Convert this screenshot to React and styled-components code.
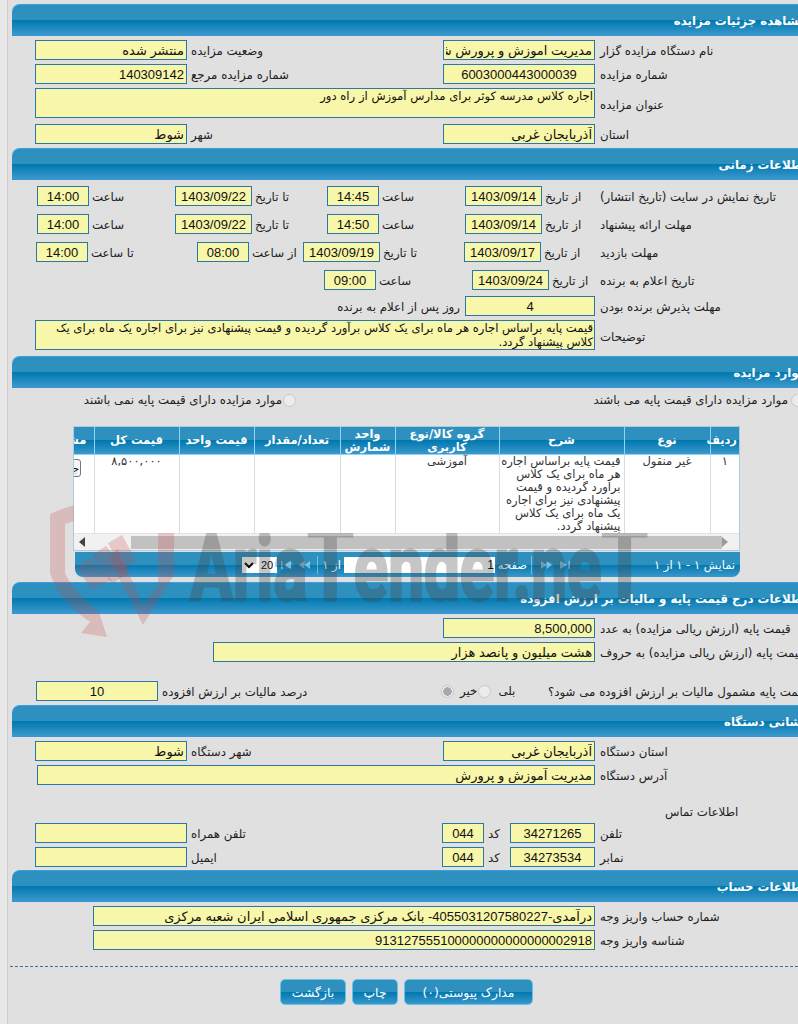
import React from 'react';
import styled, { createGlobalStyle } from 'styled-components';

const GlobalStyle = createGlobalStyle`
  html, body {
    margin: 0;
    padding: 0;
    overflow: hidden;
    background: #e0e0e0;
  }
  body {
    font-family: "Liberation Sans", "DejaVu Sans", sans-serif;
    font-size: 12px;
    color: #222;
  }
`;

const barGradient = 'linear-gradient(#2e90bf 0, #2e90bf 50%, #0078ae 50%, #3a98cc 100%)';

const Page = styled.div`
  position: relative;
  width: 798px;
  height: 1024px;
  overflow: hidden;
  padding-top: 4px;
  box-sizing: border-box;
  background: linear-gradient(to right, #e8e8e8 7px, #cfcfcf 7px, #cfcfcf 8px, #e0e0e0 8px);
`;

const SectionBar = styled.div`
  height: 32px;
  margin: ${({ $top }) => $top || 0}px -8px 0 12px;
  box-sizing: border-box;
  border-top: 1px solid #3a9fe0;
  border-bottom: 1px solid #3a94d8;
  border-top-left-radius: 8px;
  background: ${barGradient};
  direction: rtl;
  color: #fff;
  font: bold 11.8px/32px "DejaVu Sans", sans-serif;
`;

const Row = styled.div`
  display: grid;
  grid-template-columns: ${({ $cols }) => $cols};
  height: ${({ $h }) => $h || 20}px;
  margin-top: ${({ $top }) => $top || 0}px;
`;

const Label = styled.div`
  direction: rtl;
  text-align: left;
  white-space: nowrap;
  padding-left: ${({ $pad }) => $pad ?? 4}px;
  padding-top: ${({ $dy }) => $dy || 3}px;
  font: 11.8px/16px "DejaVu Sans", sans-serif;
  color: #222;
`;

const LabelEnd = styled(Label)`
  text-align: right;
  padding-left: 0;
  padding-right: 5px;
`;

const Field = styled.input`
  box-sizing: border-box;
  width: 100%;
  height: 20px;
  margin: 0;
  padding: 0 2px;
  border: 1px solid #2a78a8;
  border-radius: 0;
  background: #f8f6a8;
  color: #111;
  direction: rtl;
  text-align: ${({ $center }) => ($center ? 'center' : 'right')};
  font: 13px "Liberation Sans", "DejaVu Sans", sans-serif;
  outline: none;
`;

const Area = styled.textarea`
  box-sizing: border-box;
  width: 100%;
  height: 30px;
  margin: 0;
  padding: 0 1px;
  border: 1px solid #2a78a8;
  border-radius: 0;
  background: #f8f6a8;
  color: #111;
  direction: rtl;
  resize: none;
  overflow: hidden;
  font: 11.6px/14px "DejaVu Sans", sans-serif;
  outline: none;
`;

const Empty = styled.div``;

const RadioLine = styled.div`
  display: grid;
  grid-template-columns: 82px 214px 296px 1fr;
  height: 16px;
  margin-top: 4px;
  font: 11.8px/16px "DejaVu Sans", sans-serif;
`;

const RadioChoice = styled.label`
  display: flex;
  direction: rtl;
  align-items: center;
  white-space: nowrap;
  gap: ${({ $gap }) => $gap || 0}px;
`;

const Radio = styled.input.attrs({ type: 'radio' })`
  appearance: none;
  flex: none;
  width: 13px;
  height: 13px;
  margin: 0;
  border: 1px solid #c9c9c9;
  border-radius: 50%;
  background: ${({ $on }) =>
    $on ? 'radial-gradient(circle, #a8a8a8 0, #a8a8a8 4px, #ececec 4.5px)' : '#ececec'};
`;

const Choices = styled.div`
  display: flex;
  direction: ltr;
  align-items: center;
  height: 20px;
  margin-left: 1px;
  gap: 1px;
  font: 11.8px/16px "DejaVu Sans", sans-serif;
`;

const ChoiceText = styled.span`
  margin: 0 ${({ $r }) => $r || 0}px 0 ${({ $l }) => $l || 0}px;
`;

const GridWrap = styled.div`
  margin: 18px 58px 0 73px;
  border: 1px solid #a9cde0;
  border-bottom: 0;
`;

const TableClip = styled.div`
  position: relative;
  z-index: 4;
  overflow: hidden;
  direction: rtl;
  background: #fff;
`;

const Table = styled.table`
  table-layout: fixed;
  width: 705px;
  border-collapse: collapse;
  direction: rtl;
`;

const Th = styled.th`
  height: 27px;
  padding: 0 2px;
  border-left: 1px solid #8fd4f5;
  border-bottom: 1px solid #8fd4f5;
  background: ${barGradient};
  color: #fff;
  font: bold 11.5px/13px "DejaVu Sans", sans-serif;
  text-align: center;
`;

const Td = styled.td`
  height: 78px;
  padding: 0 3px;
  border-left: 1px solid #dcdcdc;
  vertical-align: top;
  text-align: ${({ $side }) => $side || 'center'};
  white-space: nowrap;
  font: 11.5px/13px "DejaVu Sans", sans-serif;
  color: #333;
`;

const RowButton = styled.button`
  width: 34px;
  height: 18px;
  margin-top: 4px;
  padding: 0;
  border: 1px solid #777;
  border-radius: 3px;
  background: #f4f4f4;
  font: 10px "DejaVu Sans", sans-serif;
`;

const ScrollBar = styled.div`
  display: flex;
  align-items: center;
  justify-content: space-between;
  height: 18px;
  padding: 0 6px;
  border-top: 1px solid #e4e4e4;
  box-sizing: border-box;
  background: #f1f1f1;
  border-bottom: 1px solid #a9cde0;
`;

const ScrollThumb = styled.div`
  position: absolute;
  left: 57px;
  width: 591px;
  height: 13px;
  background: #c1c1c1;
`;

const ScrollTrack = styled.div`
  position: relative;
  margin-left: -6px;
  display: flex;
  align-items: center;
  width: 100%;
  justify-content: space-between;
  padding: 0 5px;
  height: 100%;
`;

const Pager = styled.div`
  display: flex;
  direction: rtl;
  align-items: center;
  height: 25px;
  margin: 1px 58px 0 75px;
  padding-right: 5px;
  border-bottom-left-radius: 8px;
  border-bottom-right-radius: 8px;
  background: ${barGradient};
  color: #fff;
  font: 11.5px "DejaVu Sans", sans-serif;
`;

const PagerInfo = styled.span`
  width: 165px;
  white-space: nowrap;
  flex: none;
`;

const PagerIcons = styled.div`
  display: flex;
  align-items: center;
  gap: 8px;
  width: ${({ $w }) => $w}px;
  flex: none;
  justify-content: ${({ $end }) => ($end ? 'flex-end' : 'flex-start')};
  opacity: 0.45;
`;

const Sep = styled.span`
  width: 1px;
  height: 18px;
  flex: none;
  margin: 0 ${({ $m }) => $m || 0}px;
  background: rgba(255, 255, 255, 0.4);
`;

const PageField = styled.input`
  width: 151px;
  height: 16px;
  box-sizing: border-box;
  margin: 0 3px;
  padding: 0 1px;
  border: 0;
  background: #fff;
  direction: rtl;
  font: 12px "Liberation Sans", sans-serif;
`;

const PageSize = styled.select`
  width: 35px;
  height: 16px;
  margin: 0 4px 0 0;
  padding: 0;
  border: 0;
  background: #fff;
  direction: rtl;
  font: 11px "Liberation Sans", sans-serif;
`;

const ContactTitle = styled.div`
  margin: 19px 0 0 665px;
  direction: rtl;
  text-align: left;
  height: 19px;
  font: 11.8px/16px "DejaVu Sans", sans-serif;
`;

const Dashed = styled.div`
  margin: 16px 0 0 10px;
  border-top: 1px dashed #2a78a8;
`;

const Actions = styled.div`
  display: flex;
  direction: rtl;
  gap: 6px;
  margin: 12px 265px 0 0;
`;

const ActionButton = styled.button`
  width: ${({ $w }) => $w}px;
  height: 26px;
  padding: 0;
  border: 1px solid #63c3ea;
  border-radius: 5px;
  background: ${barGradient};
  color: #fff;
  font: 12.4px "DejaVu Sans", sans-serif;
`;

const Watermark = styled.svg`
  position: absolute;
  left: 0;
  top: 490px;
  z-index: 3;
  pointer-events: none;
`;

const row4 = '35px 152px 256px 152px 1fr';
const dateRow = '37px 52px 86px 77px 75px 52px 86px 77px 55px 1fr';

function FirstIcon({ flip }) {
  return (
    <svg width="10" height="8" viewBox="0 0 10 8" style={{ transform: flip ? 'scaleX(-1)' : 'none' }}>
      <path d="M0 0h1.5v8H0zM10 0v8L3 4z" fill="#fff" />
    </svg>
  );
}

function PrevIcon({ flip }) {
  return (
    <svg width="11" height="8" viewBox="0 0 11 8" style={{ transform: flip ? 'scaleX(-1)' : 'none' }}>
      <path d="M5.5 0v8L0 4zM11 0v8L5.5 4z" fill="#fff" />
    </svg>
  );
}

export default function App() {
  return (
    <Page>
      <GlobalStyle />

      <SectionBar>مشاهده جزئیات مزایده</SectionBar>
      <Row $cols={row4} $top={4}>
        <Empty />
        <Field readOnly value="منتشر شده" />
        <Label>وضعیت مزایده</Label>
        <Field readOnly value="مدیریت اموزش و پرورش شهرستان شوط" />
        <Label $pad={5}>نام دستگاه مزایده گزار</Label>
      </Row>
      <Row $cols={row4} $top={4}>
        <Empty />
        <Field readOnly value="140309142" />
        <Label>شماره مزایده مرجع</Label>
        <Field readOnly $center value="6003000443000039" />
        <Label $pad={5}>شماره مزایده</Label>
      </Row>
      <Row $cols="35px 560px 1fr" $h={30} $top={4}>
        <Empty />
        <Area readOnly value="اجاره کلاس مدرسه کوثر برای مدارس آموزش از راه دور" />
        <Label $pad={5} $dy={9}>عنوان مزایده</Label>
      </Row>
      <Row $cols={row4} $top={6}>
        <Empty />
        <Field readOnly value="شوط" />
        <Label>شهر</Label>
        <Field readOnly value="آذربایجان غربی" />
        <Label $pad={5}>استان</Label>
      </Row>

      <SectionBar $top={4}>اطلاعات زمانی</SectionBar>
      <Row $cols={dateRow} $top={6}>
        <Empty />
        <Field readOnly $center value="14:00" />
        <Label $pad={3}>ساعت</Label>
        <Field readOnly $center value="1403/09/22" />
        <Label $pad={3}>تا تاریخ</Label>
        <Field readOnly $center value="14:45" />
        <Label $pad={3}>ساعت</Label>
        <Field readOnly $center value="1403/09/14" />
        <Label $pad={3}>از تاریخ</Label>
        <Label $pad={3}>تاریخ نمایش در سایت (تاریخ انتشار)</Label>
      </Row>
      <Row $cols={dateRow} $top={8}>
        <Empty />
        <Field readOnly $center value="14:00" />
        <Label $pad={3}>ساعت</Label>
        <Field readOnly $center value="1403/09/22" />
        <Label $pad={3}>تا تاریخ</Label>
        <Field readOnly $center value="14:50" />
        <Label $pad={3}>ساعت</Label>
        <Field readOnly $center value="1403/09/14" />
        <Label $pad={3}>از تاریخ</Label>
        <Label $pad={3}>مهلت ارائه پیشنهاد</Label>
      </Row>
      <Row $cols="36px 52px 109px 52px 54px 77px 84px 77px 56px 1fr" $top={8}>
        <Empty />
        <Field readOnly $center value="14:00" />
        <Label $pad={3}>تا ساعت</Label>
        <Field readOnly $center value="08:00" />
        <Label $pad={3}>از ساعت</Label>
        <Field readOnly $center value="1403/09/19" />
        <Label $pad={3}>تا تاریخ</Label>
        <Field readOnly $center value="1403/09/17" />
        <Label $pad={3}>از تاریخ</Label>
        <Label $pad={3}>مهلت بازدید</Label>
      </Row>
      <Row $cols="324px 52px 96px 77px 48px 1fr" $top={8}>
        <Empty />
        <Field readOnly $center value="09:00" />
        <Label $pad={3}>ساعت</Label>
        <Field readOnly $center value="1403/09/24" />
        <Label $pad={3}>از تاریخ</Label>
        <Label $pad={3}>تاریخ اعلام به برنده</Label>
      </Row>
      <Row $cols="465px 130px 1fr" $top={6}>
        <LabelEnd>روز پس از اعلام به برنده</LabelEnd>
        <Field readOnly $center value="4" />
        <Label $pad={5}>مهلت پذیرش برنده بودن</Label>
      </Row>
      <Row $cols="35px 560px 1fr" $h={30} $top={4}>
        <Empty />
        <Area
          readOnly
          value="قیمت پایه براساس اجاره هر ماه برای یک کلاس برآورد گردیده و قیمت پیشنهادی نیز برای اجاره یک ماه برای یک کلاس پیشنهاد گردد."
        />
        <Label $pad={5} $dy={9}>توضیحات</Label>
      </Row>

      <SectionBar $top={6}>موارد مزایده</SectionBar>
      <RadioLine>
        <Empty />
        <RadioChoice $gap={1}>
          <Radio name="base" />
          موارد مزایده دارای قیمت پایه نمی باشند
        </RadioChoice>
        <Empty />
        <RadioChoice $gap={3} style={{ marginRight: -6 }}>
          <Radio name="base" />
          موارد مزایده دارای قیمت پایه می باشند
        </RadioChoice>
      </RadioLine>

      <GridWrap>
        <TableClip>
          <Table>
            <colgroup>
              <col width="29" />
              <col width="86" />
              <col width="125" />
              <col width="104" />
              <col width="55" />
              <col width="86" />
              <col width="75" />
              <col width="85" />
              <col width="60" />
            </colgroup>
            <thead>
              <tr>
                <Th>ردیف</Th>
                <Th>نوع</Th>
                <Th>شرح</Th>
                <Th>گروه کالا/نوع کاربری</Th>
                <Th>واحد شمارش</Th>
                <Th>تعداد/مقدار</Th>
                <Th>قیمت واحد</Th>
                <Th>قیمت کل</Th>
                <Th>مشاهده</Th>
              </tr>
            </thead>
            <tbody>
              <tr>
                <Td>۱</Td>
                <Td>غیر منقول</Td>
                <Td $side="right">
                  قیمت پایه براساس اجاره
                  <br />
                  هر ماه برای یک کلاس
                  <br />
                  براورد گردیده و قیمت
                  <br />
                  پیشنهادی نیز برای اجاره
                  <br />
                  یک ماه برای یک کلاس
                  <br />
                  پیشنهاد گردد.
                </Td>
                <Td>آموزشی</Td>
                <Td />
                <Td />
                <Td />
                <Td>۸,۵۰۰,۰۰۰</Td>
                <Td><RowButton>جزئیات</RowButton></Td>
              </tr>
            </tbody>
          </Table>
        </TableClip>
        <ScrollBar>
          <ScrollTrack>
            <ScrollThumb />
            <svg width="6" height="10" viewBox="0 0 6 10"><path d="M6 0v10L0 5z" fill="#444" /></svg>
            <svg width="6" height="10" viewBox="0 0 6 10"><path d="M0 0v10l6-5z" fill="#999" /></svg>
          </ScrollTrack>
        </ScrollBar>
      </GridWrap>
      <Pager>
        <PagerInfo>نمایش ۱ - ۱ از ۱</PagerInfo>
        <PagerIcons $w={34}>
          <FirstIcon flip />
          <PrevIcon flip />
        </PagerIcons>
        <Sep $m={4} />
        <span>صفحه</span>
        <PageField readOnly value="1" />
        <span>از ۱</span>
        <Sep $m={4} />
        <PagerIcons $w={32} $end>
          <PrevIcon />
          <FirstIcon />
        </PagerIcons>
        <PageSize defaultValue="20">
          <option>20</option>
          <option>50</option>
        </PageSize>
      </Pager>

      <SectionBar $top={5}>اطلاعات درج قیمت پایه و مالیات بر ارزش افزوده</SectionBar>
      <Row $cols="443px 152px 1fr" $top={4}>
        <Empty />
        <Field readOnly value="8,500,000" />
        <Label $pad={5}>قیمت پایه (ارزش ریالی مزایده) به عدد</Label>
      </Row>
      <Row $cols="213px 382px 1fr" $top={4}>
        <Empty />
        <Field readOnly value="هشت میلیون و پانصد هزار" />
        <Label $pad={5}>قیمت پایه (ارزش ریالی مزایده) به حروف</Label>
      </Row>
      <Row $cols="36px 122px 282px 108px 1fr" $top={19}>
        <Empty />
        <Field readOnly $center value="10" />
        <Label>درصد مالیات بر ارزش افزوده</Label>
        <Choices>
          <Radio name="tax" $on disabled />
          <ChoiceText $l={5}>خیر</ChoiceText>
          <Radio name="tax" disabled />
          <ChoiceText $l={6}>بلی</ChoiceText>
        </Choices>
        <Label $pad={0}>قیمت پایه مشمول مالیات بر ارزش افزوده می شود؟</Label>
      </Row>

      <SectionBar $top={4}>نشانی دستگاه</SectionBar>
      <Row $cols={row4} $top={4}>
        <Empty />
        <Field readOnly value="شوط" />
        <Label>شهر دستگاه</Label>
        <Field readOnly value="آذربایجان غربی" />
        <Label $pad={5}>استان دستگاه</Label>
      </Row>
      <Row $cols="37px 558px 1fr" $top={4}>
        <Empty />
        <Field readOnly value="مدیریت آموزش و پرورش" />
        <Label $pad={5}>آدرس دستگاه</Label>
      </Row>
      <ContactTitle>اطلاعات تماس</ContactTitle>
      <Row $cols="35px 152px 255px 42px 26px 85px 1fr">
        <Empty />
        <Field readOnly value="" />
        <Label>تلفن همراه</Label>
        <Field readOnly $center value="044" />
        <Label>کد</Label>
        <Field readOnly $center value="34271265" />
        <Label $pad={5}>تلفن</Label>
      </Row>
      <Row $cols="35px 152px 255px 42px 26px 85px 1fr" $top={4}>
        <Empty />
        <Field readOnly value="" />
        <Label>ایمیل</Label>
        <Field readOnly $center value="044" />
        <Label>کد</Label>
        <Field readOnly $center value="34273534" />
        <Label $pad={5}>نمابر</Label>
      </Row>

      <SectionBar $top={3}>اطلاعات حساب</SectionBar>
      <Row $cols="93px 502px 1fr" $top={4}>
        <Empty />
        <Field readOnly value="درآمدی-4055031207580227- بانک مرکزی جمهوری اسلامی ایران شعبه مرکزی" />
        <Label $pad={5}>شماره حساب واریز وجه</Label>
      </Row>
      <Row $cols="93px 502px 1fr" $top={4}>
        <Empty />
        <Field readOnly value="913127555100000000000000002918" />
        <Label $pad={5}>شناسه واریز وجه</Label>
      </Row>

      <Dashed />
      <Actions>
        <ActionButton $w={129}>مدارک پیوستی(۰)</ActionButton>
        <ActionButton $w={46}>چاپ</ActionButton>
        <ActionButton $w={66}>بازگشت</ActionButton>
      </Actions>

      <Watermark width="798" height="160" viewBox="0 490 798 160">
        <g fill="rgba(200,70,70,0.24)">
          <path d="M50 514Q112 486 174 514V575L143 625L108 557L118 549L143 605L158 585V524Q112 506 65 524V573Q72 590 99 612L107 637L81 633L90 622Q58 600 50 573z" />
          <path d="M76 567L90 558L112 580L92 590z" />
          <path d="M92 555L106 546L130 572L112 584z" />
          <path d="M108 543L122 535L136 560L122 570z" />
        </g>
        <text
          x="190"
          y="600"
          textLength="458"
          lengthAdjust="spacingAndGlyphs"
          fill="#464646"
          stroke="#464646"
          strokeWidth="3"
          opacity="0.3"
          fontFamily="Roboto, sans-serif"
          fontWeight="700"
          fontSize="92"
        >
          Aria<tspan fontSize="108">T</tspan>ender.ne<tspan fontSize="108">T</tspan>
        </text>
      </Watermark>
    </Page>
  );
}
